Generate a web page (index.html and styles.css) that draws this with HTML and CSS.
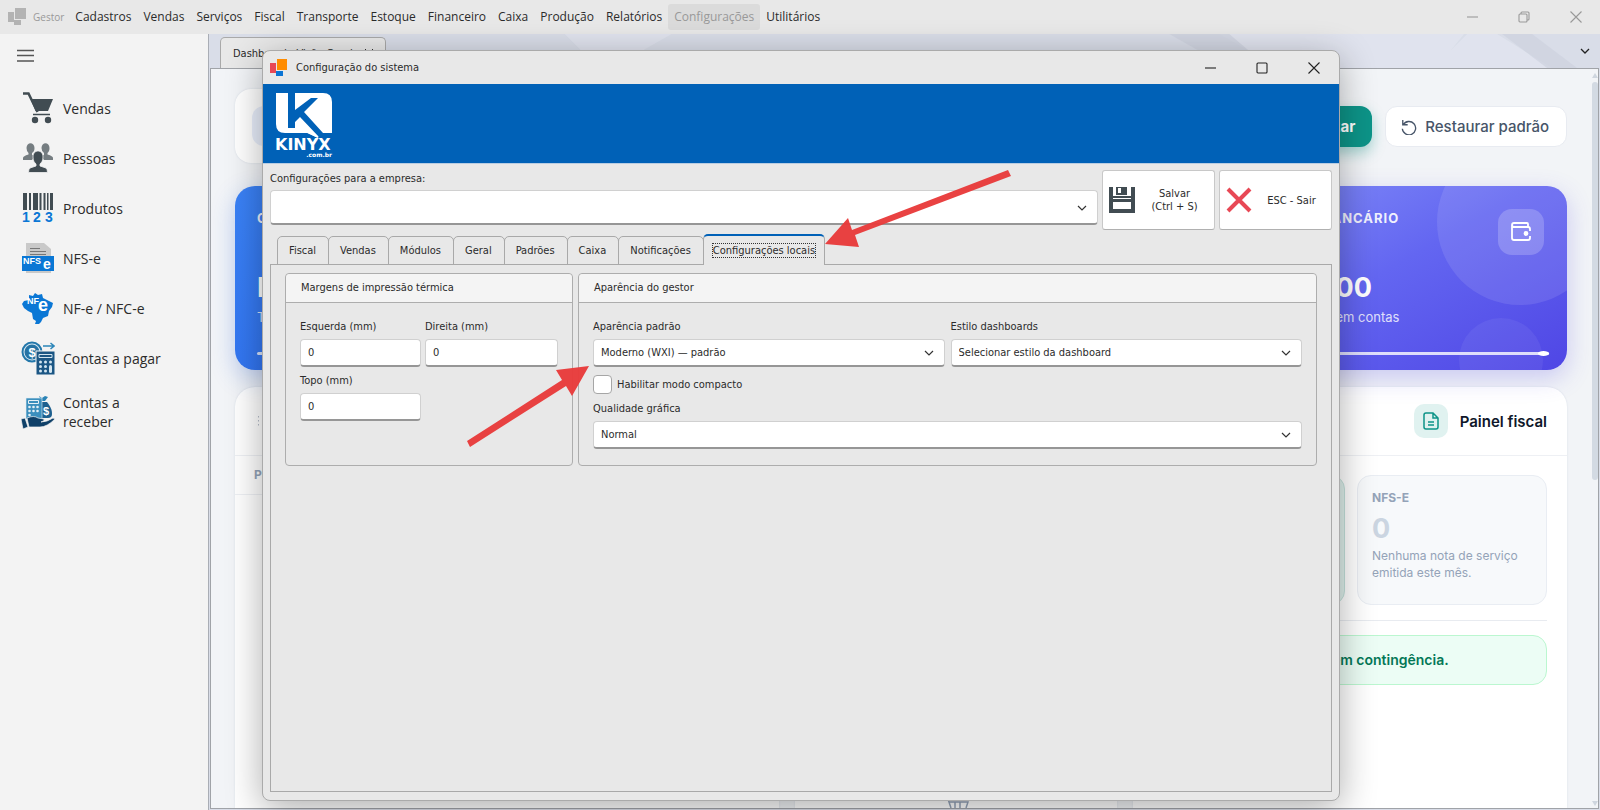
FILE: index.html
```html
<!DOCTYPE html>
<html lang="pt-BR">
<head>
  <meta charset="UTF-8" />
  <meta name="viewport" content="width=device-width, initial-scale=1.0" />
  <title>Gestor - Configuração do sistema</title>
  <link rel="stylesheet" href="styles.css">
</head>
<body>
  <!-- Main window title bar and menu -->
  <header class="topbar">
    <svg class="app-icon" width="18" height="18" viewBox="0 0 18 18"><path fill="#b3b3b3" d="M0 4h6v10H0zM7 0h11v11H7zM6 12h7v5H6z"/></svg>
    <span class="app-name">Gestor</span>
    <nav class="menu">
      <a href="#">Cadastros</a>
      <a href="#">Vendas</a>
      <a href="#">Serviços</a>
      <a href="#">Fiscal</a>
      <a href="#">Transporte</a>
      <a href="#">Estoque</a>
      <a href="#">Financeiro</a>
      <a href="#">Caixa</a>
      <a href="#">Produção</a>
      <a href="#">Relatórios</a>
      <a href="#" class="active">Configurações</a>
      <a href="#">Utilitários</a>
    </nav>
    <div class="window-buttons muted">
      <button type="button" aria-label="Minimizar"><svg width="12" height="12" viewBox="0 0 12 12"><path d="M1 6h11"/></svg></button>
      <button type="button" aria-label="Restaurar"><svg width="12" height="12" viewBox="0 0 12 12"><rect x="1" y="3" width="8" height="8" rx="1"/><path d="M3 3V2q0-1 1-1h6q1 0 1 1v6q0 1-1 1H9"/></svg></button>
      <button type="button" aria-label="Fechar"><svg width="12" height="12" viewBox="0 0 12 12"><path d="M.5.5l11 11M11.500.5l-11 11"/></svg></button>
    </div>
  </header>

  <div class="workspace">
    <!-- Sidebar -->
    <aside class="sidebar">
      <button type="button" class="burger" aria-label="Menu"><svg width="18" height="14" viewBox="0 0 18 14"><path d="M0 1.500h17M0 6.500h17M0 12h17" stroke="#555" stroke-width="1.300"/></svg></button>
      <ul class="side-menu">
        <li><a href="#">
          <svg width="32" height="32" viewBox="0 0 32 32"><path d="M1 1.500h5.500l9 18.500" fill="none" stroke="#414c52" stroke-width="2.500"/><path d="M8.500 7H31l-5 12H13.500z" fill="#414c52"/><path d="M11 22.500h17" stroke="#414c52" stroke-width="1.500"/><circle cx="13" cy="28" r="3.200" fill="#414c52"/><circle cx="26" cy="28" r="3.200" fill="#414c52"/></svg>
          <span>Vendas</span></a></li>
        <li><a href="#">
          <svg width="32" height="32" viewBox="0 0 32 32"><g fill="#757d81"><path d="M4.500 6c0-6.500 8-6.500 8 0 0 3-1 4-2.500 5v2l3 1-3 4H1v-2q0-2 5.500-3.500V11Q4.500 9 4.500 6zM19.500 6c0-6.500 8-6.500 8 0 0 3-1 4-2 5v1.500q5.500 1.500 5.500 3.500v2h-9l-3-4 3-1v-2Q19.500 9 19.500 6z"/></g><path fill="#414c52" stroke="#f3f3f3" stroke-width=".8" d="M11 15c0-8 10-8 10 0 0 4-1.500 5.500-3 7v2l6 2q1.500 1 1.500 4.500h-19q0-3.500 1.500-4.500l6-2v-2c-1.500-1.500-3-3-3-7z"/></svg>
          <span>Pessoas</span></a></li>
        <li><a href="#">
          <svg width="32" height="32" viewBox="0 0 32 32"><path fill="#414c52" d="M1 1h4v17H1zM7 1h2v17H7zM11 1h5v17h-5zM17.500 1h2v17h-2zM21.500 1h2v17h-2zM25 1h1.500v17H25zM28 1h3v17h-3z"/><g class="digits"><text x="0" y="30">1</text><text x="11" y="30">2</text><text x="23" y="30">3</text></g></svg>
          <span>Produtos</span></a></li>
        <li><a href="#">
          <svg width="32" height="32" viewBox="0 0 32 32"><path fill="#c9c9c9" d="M4 1h18l7 6v24H4z"/><path d="M8 6.500h10M8 9.500h16M8 12.500h16" stroke="#777" stroke-width="1"/><path fill="#0a77d5" d="M0 14h32v15H0z"/><text class="nfs" x="1" y="22">NFS</text><text class="nfe" x="21" y="27">e</text></svg>
          <span>NFS-e</span></a></li>
        <li><a href="#">
          <svg width="32" height="32" viewBox="0 0 32 32"><path fill="#0a77d5" d="M7 3l4 1 2-3 3 2 4-1 1 4 4 2 6 3-1 4-3 4-1 5-5 2-2 4-4 4-2-2 1-3-3-2-1-6-4-2-4-3-2-4 2-3 5-1z"/><text class="nfs" x="5" y="12">NF</text><text class="nfe big" x="16" y="19">e</text></svg>
          <span>NF-e / NFC-e</span></a></li>
        <li><a href="#">
          <svg width="34" height="34" viewBox="0 0 34 34"><circle cx="11" cy="11" r="9.500" fill="#d5e7f2" stroke="#2377aa" stroke-width="2"/><circle cx="11" cy="11" r="7.500" fill="#2673a4"/><text class="dollar" x="7.500" y="16">$</text><path d="M22 5h11M29.500 2L33 5l-3.500 3" fill="none" stroke="#2d86b9" stroke-width="1.500"/><path fill="#1b5684" stroke="#f3f3f3" d="M15 10h19v24H15z"/><path stroke="#d3e5f0" fill="none" d="M18 13.500h13v3H18z"/><g fill="#d3e5f0"><circle cx="19.500" cy="21" r="1.500"/><circle cx="24.500" cy="21" r="1.500"/><circle cx="29.500" cy="21" r="1.500"/><circle cx="19.500" cy="25.500" r="1.500"/><circle cx="24.500" cy="25.500" r="1.500"/><circle cx="19.500" cy="30" r="1.500"/><circle cx="24.500" cy="30" r="1.500"/><rect x="28" y="24" width="3" height="8" rx="1.500"/></g></svg>
          <span>Contas a pagar</span></a></li>
        <li><a href="#">
          <svg width="34" height="34" viewBox="0 0 34 34"><path fill="#2a83b6" d="M18 1l3 2 3-2 3 1-3 4h-4z"/><path fill="#1e608f" d="M19 7h7c4 5 5 8 5 12q0 4-4 4h-9z"/><path fill="#3c8fbd" stroke="#e6f0f6" stroke-width=".6" d="M5 3h16v21H5z"/><path fill="none" stroke="#e6f0f6" d="M7.500 5.500h10v3h-10z"/><g fill="#e6f0f6"><circle cx="8.500" cy="12" r="1.300"/><circle cx="12.500" cy="12" r="1.300"/><circle cx="16.500" cy="12" r="1.300"/><circle cx="8.500" cy="16" r="1.300"/><circle cx="12.500" cy="16" r="1.300"/><circle cx="16.500" cy="16" r="1.300"/><circle cx="8.500" cy="20" r="1.300"/></g><text class="dollar small" x="22" y="20">$</text><path fill="#0f4068" stroke="#f3f3f3" stroke-width=".7" d="M0 24l4-1 3 9-5 2zM6 23q7-3 11 0l6 1q1 2-3 3 6 0 12-4l2 1q-8 8-15 8l-11 0z"/></svg>
          <span>Contas a receber</span></a></li>
      </ul>
    </aside>

    <!-- Document area -->
    <main class="documents">
      <div class="doc-tabs">
        <svg class="doc-pattern" viewBox="0 0 1390 34" preserveAspectRatio="none"><path fill="#e4e8f1" d="M355 0h107l-30 17h-60zM1010 0h100l-30 34h-10zM1055 0h200l-18 22 12 12H1020zM1258 0h30l55 34h-94l-13-12z" opacity=".6"/><path fill="#cdd2de" opacity=".7" d="M960 0h60l40 34h-40zM1293 0h30l45 34h-30zM980 34l14-17 26 17z"/></svg>
        <button type="button" class="doc-tab">Dashboard - Visão Geral <svg width="8" height="8" viewBox="0 0 8 8"><path d="M0 0l8 8M8 0L0 8" stroke="#333"/></svg></button>
        <button type="button" class="doc-more" aria-label="Mais abas"><svg width="12" height="12" viewBox="0 0 12 12"><path d="M2 4l4 4 4-4" fill="none" stroke="#222" stroke-width="1.300"/></svg></button>
      </div>
      <div class="dashboard">
        <div class="dash-scroll">
          <section class="dash-head">
            <div class="dash-title"><i class="head-tile"></i></div>
            <button type="button" class="btn-save">Personalizar</button>
            <button type="button" class="btn-reset">
              <svg width="16" height="16" viewBox="0 0 18 18" fill="none" stroke="#475569" stroke-width="1.500"><path d="M2 1v5.500h5.500M2.500 6.500A7.500 7.500 0 1 1 1.500 11"/></svg>
              Restaurar padrão
            </button>
          </section>

          <section class="kpis">
            <article class="kpi blue">
              <h3>Contas</h3>
              <strong>R$</strong>
              <p>Total</p>
              <div class="kpi-line"></div>
            </article>
            <article class="kpi"></article>
            <article class="kpi"></article>
            <article class="kpi purple">
              <h3>Saldo bancário</h3>
              <strong>R$ 0,00</strong>
              <p>Disponível em contas</p>
              <div class="kpi-line"></div>
              <span class="kpi-icon"><svg width="22" height="22" viewBox="0 0 22 22" fill="none" stroke="#fff" stroke-width="1.800"><path d="M18 6V3q0-1-1-1H4Q2 2 2 4t2 2h14q2 0 2 2v2M20 15v2q0 2-2 2H4q-2 0-2-2V4"/><circle cx="16" cy="12.500" r="1.500" fill="#fff"/></svg></span>
            </article>
          </section>

          <section class="panels">
            <article class="panel">
              <div class="panel-head"><svg class="grip" width="6" height="10" viewBox="0 0 6 10" fill="#b4bcc9"><path d="M0 0h1v1.500H0zM4 0h1v1.500H4zM0 4h1v1.500H0zM4 4h1v1.500H4zM0 8h1v1.500H0zM4 8h1v1.500H4z"/></svg></div>
              <div class="panel-cols">Produto</div>
            </article>
            <article class="panel empty">
              <svg width="26" height="26" viewBox="0 0 26 26" fill="none" stroke="#94a3b8" stroke-width="1.500"><path d="M1 17h4l3 9M6 20h19l-2 6M12 20v6M17 20v6"/></svg>
            </article>
            <article class="panel fiscal">
              <div class="panel-head">
                <span class="panel-tile"><svg width="16" height="18" viewBox="0 0 16 18" fill="none" stroke="#0d9488" stroke-width="1.500"><path d="M10 1H3q-2 0-2 2v12q0 2 2 2h10q2 0 2-2V6zM10 1v5h5M5 10h6M5 13h6"/></svg></span>
                <h2>Painel fiscal</h2>
              </div>
              <div class="fiscal-body">
                <div class="stats">
                  <div class="stat green"></div>
                  <div class="stat">
                    <h4>NFS-E</h4>
                    <strong>0</strong>
                    <p>Nenhuma nota de serviço emitida este mês.</p>
                  </div>
                </div>
                <p class="notice">Nenhuma nota emitida em contingência.</p>
              </div>
            </article>
          </section>
        </div>
        <div class="scrollbar"><i class="up"></i><i class="thumb"></i><i class="down"></i></div>
      </div>
    </main>
  </div>

  <!-- Settings window -->
  <section class="dialog" role="dialog" aria-labelledby="dialog-title">
    <div class="dialog-title">
      <svg width="18" height="18" viewBox="0 0 18 18"><path fill="#e84855" d="M0 4h6v10H0z"/><path fill="#ff8c00" d="M7 0h10v11H7z"/><path fill="#0a74d4" d="M6 12h7v5H6z"/></svg>
      <span id="dialog-title">Configuração do sistema</span>
      <div class="window-buttons">
        <button type="button" aria-label="Minimizar"><svg width="12" height="12" viewBox="0 0 12 12"><path d="M1 6h11"/></svg></button>
        <button type="button" aria-label="Maximizar"><svg width="12" height="12" viewBox="0 0 12 12"><rect x="1" y="1" width="10" height="10" rx="1"/></svg></button>
        <button type="button" aria-label="Fechar"><svg width="12" height="12" viewBox="0 0 12 12"><path d="M.5.5l11 11M11.500.5l-11 11"/></svg></button>
      </div>
    </div>

    <div class="banner">
      <svg width="60" height="66" viewBox="0 0 60 66">
        <path fill="#fff" d="M1 1h47q9 0 9 9v31H45l-2 5-10-5H10q-9 0-9-9z"/>
        <path fill="#0061b7" d="M13 0h7v18L36 6h7L29 20l19 21-4 4-19-20-5 5v6h-7z"/>
        <path fill="#fff" d="M30 40h7l6 6z"/>
        <text class="brand" x="0" y="58">KINYX</text>
        <text class="brand-sub" x="57" y="65">.com.br</text>
      </svg>
    </div>

    <div class="company-row">
      <div class="field company">
        <label for="empresa">Configurações para a empresa:</label>
        <div class="select tall"><select id="empresa"><option></option></select><svg width="12" height="12" viewBox="0 0 12 12"><path d="M2 4l4 4 4-4"/></svg></div>
      </div>
      <button type="button" class="action">
        <svg width="26" height="26" viewBox="0 0 26 26"><path fill="#414c52" d="M0 0h4v9h18V0h4v26H0zM4 15v7h18v-7z" fill-rule="evenodd"/><path fill="#414c52" d="M7 0h11v8H7z"/><path fill="#fff" d="M9 1h3v5H9zM4 11h18v1H4z"/></svg>
        <span>Salvar<br>(Ctrl + S)</span>
      </button>
      <button type="button" class="action">
        <svg width="26" height="26" viewBox="0 0 26 26"><path d="M2 2l22 22M24 2L2 24" stroke="#e84855" stroke-width="4"/></svg>
        <span>ESC - Sair</span>
      </button>
    </div>

    <div class="tabs" role="tablist">
      <button type="button" role="tab">Fiscal</button>
      <button type="button" role="tab">Vendas</button>
      <button type="button" role="tab">Módulos</button>
      <button type="button" role="tab">Geral</button>
      <button type="button" role="tab">Padrões</button>
      <button type="button" role="tab">Caixa</button>
      <button type="button" role="tab">Notificações</button>
      <button type="button" role="tab" class="active" aria-selected="true"><span>Configurações locais</span></button>
    </div>

    <div class="tab-page">
      <fieldset class="group margins">
        <h3>Margens de impressão térmica</h3>
        <div class="group-body">
          <div class="field"><label for="esquerda">Esquerda (mm)</label><input type="text" id="esquerda" value="0"></div>
          <div class="field"><label for="direita">Direita (mm)</label><input type="text" id="direita" value="0"></div>
          <div class="field"><label for="topo">Topo (mm)</label><input type="text" id="topo" value="0"></div>
        </div>
      </fieldset>
      <fieldset class="group look">
        <h3>Aparência do gestor</h3>
        <div class="group-body">
          <div class="field">
            <label for="aparencia">Aparência padrão</label>
            <div class="select"><select id="aparencia"><option>Moderno (WXI) — padrão</option></select><svg width="12" height="12" viewBox="0 0 12 12"><path d="M2 4l4 4 4-4"/></svg></div>
          </div>
          <div class="field">
            <label for="estilo">Estilo dashboards</label>
            <div class="select"><select id="estilo"><option>Selecionar estilo da dashboard</option></select><svg width="12" height="12" viewBox="0 0 12 12"><path d="M2 4l4 4 4-4"/></svg></div>
          </div>
          <label class="check"><input type="checkbox"> Habilitar modo compacto</label>
          <div class="field wide">
            <label for="qualidade">Qualidade gráfica</label>
            <div class="select"><select id="qualidade"><option>Normal</option></select><svg width="12" height="12" viewBox="0 0 12 12"><path d="M2 4l4 4 4-4"/></svg></div>
          </div>
        </div>
      </fieldset>
    </div>

    <!-- Pointer arrows -->
    <svg class="arrow arrow-tab" width="190" height="80" viewBox="0 0 190 80"><path d="M2 75l23-26 4 12L185 1l3 6L32 66l4 12z"/></svg>
    <svg class="arrow arrow-field" width="124" height="84" viewBox="0 0 124 84"><path d="M122 1L105 31l-6-10L3 82l-3-6 95-61-6-10z"/></svg>
  </section>
</body>
</html>
```
FILE: styles.css
```css
/* Base */
*, *::before, *::after {
  box-sizing: border-box;
  margin: 0;
  padding: 0;
}
body {
  height: 100vh;
  display: flex;
  flex-direction: column;
  overflow: hidden;
  position: relative;
  background: #f3f3f3;
  color: #2b2b2b;
  font-family: "Open Sans", "Noto Sans", sans-serif;
  font-size: 12px;
}
a { color: inherit; text-decoration: none; }
ul { list-style: none; }
svg { flex: none; }
button, input, select { font: inherit; color: inherit; }
button { border: none; background: none; }

/* Title bar and menu */
.topbar {
  display: flex;
  align-items: center;
  height: 34px;
  flex: none;
  padding-left: 8px;
  background: #e8e8e8;
}
.app-name {
  margin: 0 5px 0 7px;
  font-size: 10px;
  color: #999;
}
.menu { display: flex; }
.menu a {
  padding: 0 6px;
  line-height: 26px;
  border-radius: 3px;
}
.menu .active { background: #dbdbdb; color: #999; }

.window-buttons { display: flex; margin-left: auto; }
.window-buttons button {
  width: 52px;
  display: flex;
  justify-content: center;
}
.window-buttons svg { fill: none; stroke: #222; stroke-width: 1.1; }
.window-buttons.muted svg { stroke: #999; }
.topbar .window-buttons { margin-right: -2px; }

.workspace { display: flex; flex: 1; min-height: 0; }

/* Sidebar */
.sidebar {
  width: 209px;
  flex: none;
  border-right: 1px solid #a9adb5;
  padding-top: 15px;
}
.burger { display: block; margin-left: 17px; height: 14px; }
.burger svg { display: block; }
.side-menu { padding-top: 20px; }
.side-menu a {
  display: flex;
  align-items: center;
  min-height: 50px;
  padding: 10px 0;
  padding-left: 21px;
  font-size: 14px;
  line-height: 19px;
}
.side-menu svg { width: 34px; margin: -2px 0; }
.side-menu span { width: 106px; margin-left: 8px; }
.side-menu text { font-family: "Liberation Sans", sans-serif; font-weight: bold; fill: #fff; }
.side-menu .digits text { font-size: 14px; fill: #0a77d5; }
.side-menu .nfs { font-size: 9px; }
.side-menu .nfe { font-size: 14px; }
.side-menu .nfe.big { font-size: 18px; }
.side-menu .dollar { font-size: 13px; }
.side-menu .dollar.small { font-size: 11px; }

/* Document tabs */
.documents {
  flex: 1;
  min-width: 0;
  display: flex;
  flex-direction: column;
  padding: 0 1px 1px;
  background: #d9dde8;
}
.doc-tabs {
  position: relative;
  display: flex;
  align-items: flex-end;
  height: 34px;
  flex: none;
  padding-left: 10px;
}
.doc-pattern { position: absolute; top: 0; left: 0; width: 100%; height: 100%; }
.doc-tab {
  position: relative;
  display: flex;
  align-items: center;
  gap: 12px;
  height: 31px;
  padding: 0 12px;
  border: 1px solid #a9a9a9;
  border-bottom: none;
  border-radius: 5px 5px 0 0;
  background: #e8e8e8;
  font-family: "DejaVu Sans Condensed", "DejaVu Sans", sans-serif;
  font-size: 11px;
}
.doc-more { position: relative; margin: 0 8px 11px auto; height: 12px; }
.doc-more svg { display: block; }

/* Dashboard */
.dashboard {
  flex: 1;
  min-height: 0;
  display: flex;
  border: 1px solid #a0a3a8;
  background: #f2f4f7;
  font-family: Inter, sans-serif;
}
.dash-scroll {
  flex: 1;
  min-width: 0;
  display: flex;
  flex-direction: column;
  overflow: hidden;
  padding: 20px 24px 0;
}
.dash-head {
  display: flex;
  align-items: flex-start;
  gap: 13px;
  height: 74px;
  flex: none;
}
.dash-title {
  flex: 1;
  height: 74px;
  padding: 17px;
  border-radius: 16px;
  background: #fff;
  box-shadow: 0 0 2px #d5dbe5;
}
.head-tile { display: block; width: 40px; height: 40px; border-radius: 12px; background: #e8eefb; }
.btn-save, .btn-reset {
  height: 41px;
  margin-top: 17px;
  border-radius: 12px;
  font-size: 15px;
}
.btn-save {
  padding: 0 17px;
  background: #0d9488;
  color: #fff;
  font-weight: 700;
  box-shadow: 0 6px 14px rgba(13, 148, 136, 0.35);
}
.btn-reset {
  display: flex;
  align-items: center;
  gap: 8px;
  padding: 0 17px 0 15px;
  border: 1px solid #e8ebf1;
  background: #fff;
  color: #475569;
  font-weight: 500;
}

.kpis {
  display: grid;
  grid-template-columns: repeat(4, 1fr);
  gap: 16px;
  flex: none;
  margin: 23px 0 17px;
}
.kpi {
  position: relative;
  display: flex;
  flex-direction: column;
  height: 184px;
  padding: 22px;
  border-radius: 20px;
  overflow: hidden;
  color: #fff;
}
.kpi h3 {
  line-height: 20px;
  font-size: 13px;
  font-weight: 700;
  letter-spacing: 1px;
  text-transform: uppercase;
  opacity: .9;
}
.kpi strong { margin-top: 44px; font-size: 27px; line-height: 32px; }
.kpi p { margin-top: 3px; font-size: 13px; line-height: 20px; opacity: .8; }
.kpi-line {
  position: relative;
  height: 3px;
  margin: 25px -4px 0 0;
  flex: none;
  border-radius: 3px;
  background: rgba(255, 255, 255, 0.8);
}
.kpi-line::after {
  content: "";
  position: absolute;
  top: -1px;
  right: 0;
  width: 11px;
  height: 5px;
  border-radius: 50%;
  background: #fff;
}
.kpi.blue {
  background: linear-gradient(135deg, #3b82f6, #2563eb);
  box-shadow: 0 8px 24px rgba(37, 99, 235, 0.25);
}
.kpi.purple {
  background: linear-gradient(150deg, #818cf8, #6366f1 45%, #4f46e5);
  box-shadow: 0 8px 24px rgba(79, 70, 229, 0.25);
}
/* Light circles over the card */
.kpi.purple::before, .kpi.purple::after {
  content: "";
  position: absolute;
  border-radius: 50%;
  background: rgba(255, 255, 255, 0.1);
}
.kpi.purple::before { width: 166px; height: 166px; top: -47px; right: -36px; }
.kpi.purple::after { width: 84px; height: 84px; bottom: -32px; right: 24px; background: rgba(255, 255, 255, 0.06); }
.kpi-icon {
  position: absolute;
  top: 23px;
  right: 23px;
  z-index: 1;
  display: flex;
  align-items: center;
  justify-content: center;
  width: 46px;
  height: 46px;
  border-radius: 14px;
  background: rgba(255, 255, 255, 0.2);
}

.panels {
  flex: 1;
  min-height: 0;
  display: grid;
  grid-template-columns: 544fr 322fr 434fr;
  gap: 16px;
}
.panel {
  border-radius: 20px 20px 0 0;
  background: #fff;
  box-shadow: 0 0 2px #d5dbe5;
}
.panel.empty { display: flex; align-items: flex-end; justify-content: center; }
.panel-head {
  display: flex;
  align-items: center;
  height: 69px;
  padding: 0 20px 0 23px;
  border-bottom: 1px solid #eef0f4;
}
.fiscal .panel-head { justify-content: flex-end; gap: 12px; }
.fiscal h2 { font-size: 15px; font-weight: 600; color: #0f172a; }
.panel-tile {
  display: flex;
  align-items: center;
  justify-content: center;
  width: 34px;
  height: 34px;
  border-radius: 10px;
  background: #e0f2f0;
}
.panel-cols {
  padding-left: 19px;
  border-bottom: 1px solid #eef0f4;
  line-height: 38px;
  font-size: 12px;
  font-weight: 700;
  color: #94a3b8;
  text-transform: uppercase;
}
.fiscal-body { padding: 19px 20px; }
.stats {
  display: grid;
  grid-template-columns: 1fr 190px;
  gap: 12px;
  padding-bottom: 15px;
  border-bottom: 1px solid #e8ebf0;
}
.stat {
  height: 130px;
  padding: 14px;
  border: 1px solid #e9edf3;
  border-radius: 14px;
  background: #f7f9fb;
  color: #94a3b8;
}
.stat.green { background: #dff0ec; border-color: #c4e2dc; }
.stat h4 { font-size: 12px; line-height: 16px; }
.stat strong { display: block; margin: 7px 0 2px; font-size: 27px; line-height: 32px; color: #cbd5e1; }
.stat p { font-size: 12px; line-height: 17px; }
.notice {
  margin-top: 14px;
  height: 50px;
  padding-left: 22px;
  border: 1px solid #bbf7d0;
  border-radius: 14px;
  background: #ecfdf5;
  color: #047857;
  font-size: 14px;
  font-weight: 600;
  line-height: 48px;
}

.scrollbar {
  display: flex;
  flex-direction: column;
  align-items: center;
  width: 7px;
  flex: none;
  padding: 4px 0 2px;
}
.scrollbar i { border: 3px solid transparent; }
.scrollbar .up { border-top: none; border-bottom: 5px solid #cfd6df; }
.scrollbar .down { margin-top: auto; border-bottom: none; border-top: 5px solid #cfd6df; }
.scrollbar .thumb { height: 398px; margin-top: 4px; border-color: #d3dae3; border-radius: 3px; background: #d3dae3; }

/* Settings window */
.dialog {
  position: absolute;
  top: 50px;
  right: 260px;
  bottom: 9px;
  left: 262px;
  display: flex;
  flex-direction: column;
  padding: 0 7px 8px;
  border: 1px solid #aaa;
  border-radius: 8px;
  background: #e8e8e8;
  box-shadow: 0 8px 36px rgba(0, 0, 0, 0.32);
  font-family: "DejaVu Sans Condensed", "DejaVu Sans", sans-serif;
  font-size: 11px;
}
.dialog-title {
  display: flex;
  align-items: center;
  gap: 8px;
  height: 33px;
  flex: none;
}
.dialog-title .window-buttons { margin-right: -8px; }
.banner {
  height: 80px;
  flex: none;
  margin: 0 -7px;
  padding: 8px 0 0 12px;
  border-bottom: 1px solid #b9cde2;
  background: #0061b7;
}
.brand { font: bold 16px "DejaVu Sans", sans-serif; fill: #fff; }
.brand-sub { font: bold 6px "DejaVu Sans", sans-serif; fill: #fff; text-anchor: end; }

.company-row {
  display: flex;
  gap: 4px;
  margin-top: 6px;
}
.field label { display: block; line-height: 14px; padding-bottom: 5px; }
.company { flex: 1; padding-top: 2px; }
.company label { padding-bottom: 4px; }
.field input, .select select {
  display: block;
  width: 100%;
  height: 28px;
  padding: 0 7px;
  border: 1px solid #d0d0d0;
  border-bottom: 2px solid #969696;
  border-radius: 4px;
  background: #fff;
  outline: none;
}
.select { position: relative; }
.select select { appearance: none; }
.select.tall select { height: 35px; }
.select svg {
  position: absolute;
  right: 10px;
  top: 50%;
  margin-top: -6px;
  fill: none;
  stroke: #333;
  stroke-width: 1.2;
  pointer-events: none;
}
.action {
  display: flex;
  align-items: center;
  width: 113px;
  height: 60px;
  padding-left: 6px;
  border: 1px solid #c8c8c8;
  border-bottom-color: #b0b0b0;
  border-radius: 3px;
  background: #fff;
  line-height: 13px;
}
.action span { flex: 1; text-align: center; }

.tabs {
  display: flex;
  align-items: flex-end;
  height: 31px;
  margin: 4px 0 -1px 7px;
}
.tabs button {
  height: 29px;
  padding: 0 12px 0 11px;
  margin-right: -1px;
  border: 1px solid #a9a9a9;
  border-radius: 5px 5px 0 0;
}
.tabs .active {
  position: relative;
  height: 31px;
  padding: 0 9px;
  border-top: 2px solid #0061b7;
  border-bottom: none;
  background: #e8e8e8;
}
.tabs .active span { outline: 1px dotted #333; }
.tab-page {
  flex: 1;
  display: flex;
  align-items: flex-start;
  gap: 5px;
  padding: 8px 14px;
  border: 1px solid #a9a9a9;
}
.group {
  height: 193px;
  border: 1px solid #adadad;
  border-radius: 4px;
  overflow: hidden;
}
.group h3 {
  padding-left: 15px;
  border-bottom: 1px solid #adadad;
  background: #f4f4f4;
  font-size: 11px;
  font-weight: normal;
  line-height: 28px;
}
.margins { width: 287px; }
.look { flex: 1; }
.group-body {
  display: grid;
  grid-template-columns: 121px 133px;
  column-gap: 4px;
  row-gap: 7px;
  padding: 17px 14px;
}
.look .group-body { grid-template-columns: 1fr 1fr; column-gap: 6px; }
.check {
  grid-column: 1 / -1;
  display: flex;
  align-items: center;
  gap: 5px;
  height: 21px;
}
.check input {
  appearance: none;
  width: 19px;
  height: 19px;
  border: 1px solid #a6a6a6;
  border-radius: 4px;
  background: #fff;
}
.wide { grid-column: 1 / -1; }

/* Arrows drawn over the window */
.arrow { position: absolute; fill: #e93c3c; opacity: .97; }
.arrow-tab { left: 560px; top: 118px; }
.arrow-field { left: 204px; top: 314px; }
```
